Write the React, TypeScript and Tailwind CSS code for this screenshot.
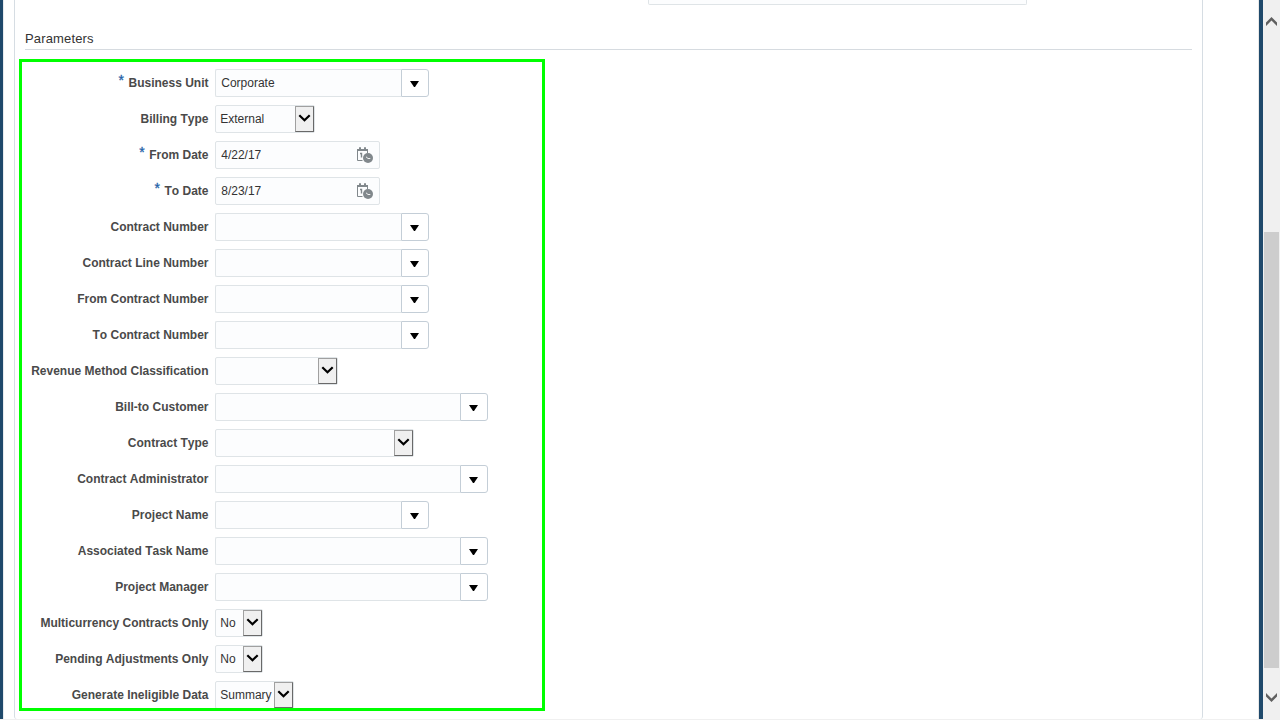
type Kind = "combo" | "select" | "date";

interface Field {
  label: string;
  kind: Kind;
  width: string;
  value?: string;
  required?: boolean;
}

const fields: Field[] = [
  { label: "Business Unit", kind: "combo", width: "w-[214px]", value: "Corporate", required: true },
  { label: "Billing Type", kind: "select", width: "w-[100px]", value: "External" },
  { label: "From Date", kind: "date", width: "w-[165px]", value: "4/22/17", required: true },
  { label: "To Date", kind: "date", width: "w-[165px]", value: "8/23/17", required: true },
  { label: "Contract Number", kind: "combo", width: "w-[214px]" },
  { label: "Contract Line Number", kind: "combo", width: "w-[214px]" },
  { label: "From Contract Number", kind: "combo", width: "w-[214px]" },
  { label: "To Contract Number", kind: "combo", width: "w-[214px]" },
  { label: "Revenue Method Classification", kind: "select", width: "w-[123px]" },
  { label: "Bill-to Customer", kind: "combo", width: "w-[273px]" },
  { label: "Contract Type", kind: "select", width: "w-[199px]" },
  { label: "Contract Administrator", kind: "combo", width: "w-[273px]" },
  { label: "Project Name", kind: "combo", width: "w-[214px]" },
  { label: "Associated Task Name", kind: "combo", width: "w-[273px]" },
  { label: "Project Manager", kind: "combo", width: "w-[273px]" },
  { label: "Multicurrency Contracts Only", kind: "select", width: "w-[48px]", value: "No" },
  { label: "Pending Adjustments Only", kind: "select", width: "w-[48px]", value: "No" },
  { label: "Generate Ineligible Data", kind: "select", width: "w-[79px]", value: "Summary" },
];

function CalendarIcon() {
  return (
    <svg className="mt-[4px] mr-[5px] shrink-0" width="18" height="18" viewBox="0 0 18 18" fill="none">
      <path d="M1 3H12V5H1Z" fill="#81888c" />
      <path d="M1.5 4V14.5H6.5M11.5 4V7" stroke="#81888c" />
      <path d="M4 1.3V4M9 1.3V4" stroke="#81888c" strokeWidth="2" />
      <path d="M4 7.5H5.5V11.5" stroke="#81888c" strokeWidth="1.4" />
      <circle cx="12" cy="12" r="5" fill="#81888c" />
      <path d="M10 10.8L12 12.5H14.3" stroke="#fff" strokeWidth="0.9" />
    </svg>
  );
}

function Control({ kind, width, value }: Field) {
  if (kind === "combo") {
    return (
      <div className={`flex h-7 ${width}`}>
        <div className="min-w-0 flex-1 rounded-l-[2px] border border-r-0 border-[#dfe4e7] bg-[#fcfdfe] pl-[5.25px] leading-[26px]">
          {value}
        </div>
        <button className="flex h-7 w-7 shrink-0 rounded-r-[3px] border border-[#c4ced7] bg-white" aria-label="Open list">
          <svg width="26" height="26" viewBox="0 0 26 26">
            <path d="M8 11H17L13 17H12Z" fill="#000" />
          </svg>
        </button>
      </div>
    );
  }
  if (kind === "date") {
    return (
      <div className={`flex h-7 justify-between rounded-[2px] border border-[#dfe4e7] bg-[#fcfdfe] pl-[5.25px] leading-[26px] ${width}`}>
        <span>{value}</span>
        <CalendarIcon />
      </div>
    );
  }
  return (
    <div className={`flex h-7 justify-between rounded-[2px] border border-[#dfe4e7] bg-[#fcfdfe] leading-[26px] ${width}`}>
      <span className="w-0 pl-[4.25px] whitespace-nowrap">{value}</span>
      <div className="h-[26px] w-[19px] shrink-0 border border-t-[#a0a0a0] border-r-[#696969] border-b-[#696969] border-l-[#a0a0a0] bg-[#f0f0f0]">
        <svg width="17" height="24" viewBox="0 0 17 24" fill="none">
          <path d="M3.3 8.2L8.5 13.2L13.7 8.2" stroke="#000" strokeWidth="2.2" />
        </svg>
      </div>
    </div>
  );
}

export default function App() {
  return (
    <div className="flex h-[720px] w-[1280px] overflow-hidden bg-[#f0f0f0] font-['Liberation_Sans',Arial,sans-serif] text-[12px] text-[#333] [font-kerning:none]">
      <div className="flex h-[719px] w-[1263px] border-r-4 border-l-[3px] border-[#1f496b] bg-white">
        <div className="flex w-full border-r border-l border-r-[#e8e8e8] border-l-[#e7ebee] pl-[10px]">
          <main className="h-[719px] w-[1189px] rounded-b-[3px] border-r border-l border-[#d6dde3] px-[4px]">
            <div className="ml-[629px] h-[5px] w-[379px] rounded-b-[2px] border border-t-0 border-[#dfe4e7] bg-[#fcfdfe]" />
            <h2 className="mr-[6px] ml-[6px] h-[45px] border-b border-[#d6dbe0] pt-[25px] text-[13px] leading-[17px] tracking-[0.15px]">
              Parameters
            </h2>
            <section className="mt-[9px] h-[652px] w-[526px] overflow-hidden border-[3px] border-[#00ff00] pt-[7px]">
              <div className="flex flex-col gap-2">
                {fields.map((field) => (
                  <div key={field.label} className="flex h-7 gap-[6.5px]">
                    <div className="flex w-[186.5px] shrink-0 justify-end">
                      {field.required && (
                        <span className="mr-[4.5px] text-[14px] leading-[22px] text-[#1f62a8] [-webkit-text-stroke:0.3px_#1f62a8]">*</span>
                      )}
                      <span className="leading-[28px] font-bold whitespace-nowrap text-[#4a4a4a]">{field.label}</span>
                    </div>
                    <Control {...field} />
                  </div>
                ))}
              </div>
            </section>
          </main>
        </div>
      </div>
      <aside className="h-[720px] w-[17px] bg-[#f0f0f0]">
        <svg className="block" width="17" height="232" viewBox="0 0 17 232" fill="none">
          <path d="M3 22.5L8.5 17L14 22.5V26L8.5 20.5L3 26Z" fill="#606060" />
        </svg>
        <div className="mx-px h-[436px] bg-[#cdcdcd]" />
        <svg className="block" width="17" height="52" viewBox="0 0 17 52" fill="none">
          <path d="M3 25L8.5 30.5L14 25V28.5L8.5 34L3 28.5Z" fill="#606060" />
        </svg>
      </aside>
    </div>
  );
}
